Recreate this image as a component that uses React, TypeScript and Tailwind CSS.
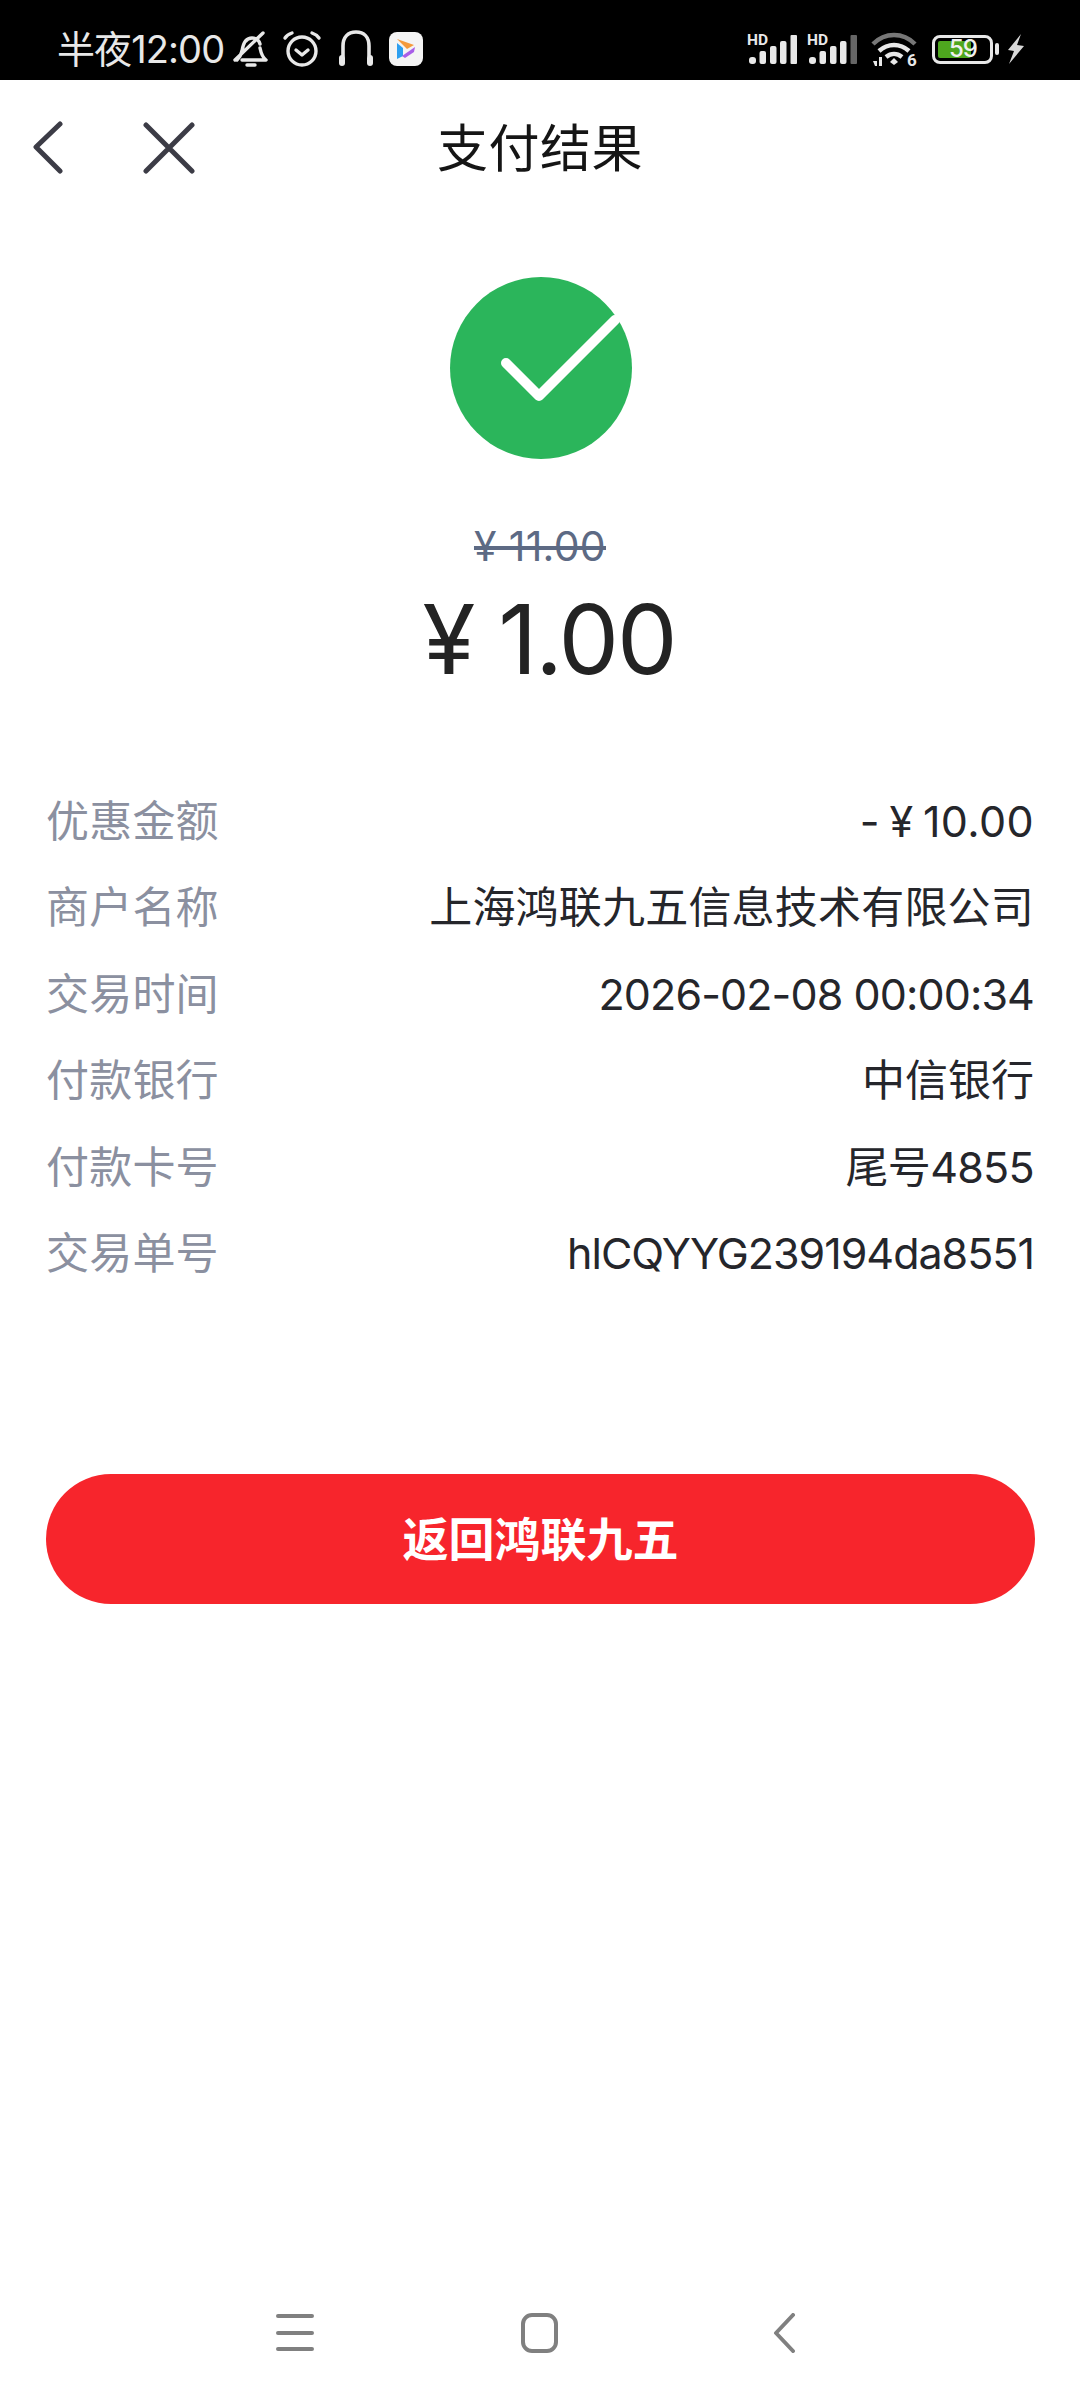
const SANS = "font-['Inter','Noto_Sans_CJK_SC',sans-serif]";

function Signal({ lastBar }: { lastBar: string }) {
  return (
    <svg width="50" height="32" viewBox="0 0 50 32" fill="#e8e8e8" className="overflow-visible">
      <text x="0" y="12" fontSize="15.5" fontWeight="700" fontFamily="Roboto, sans-serif">HD</text>
      <rect x="2" y="24" width="7" height="7" rx="3" />
      <rect x="12.5" y="18" width="6.5" height="13" rx="2" />
      <rect x="23" y="13" width="6.5" height="18" rx="2" />
      <rect x="33" y="8" width="6.5" height="23" rx="2" />
      <rect x="43.5" y="2" width="6.5" height="29" rx="1" fill={lastBar} />
    </svg>
  );
}

function StatusBar() {
  return (
    <div className="h-[80px] bg-black flex items-center justify-between pl-[57px] pr-[55px] pt-[26px] pb-[8px] text-[#e8e8e8]">
      <div className="flex items-center">
        <span className="text-[38px] leading-[48px] tracking-[-0.9px]">半夜12:00</span>
        <svg className="ml-[9px]" width="36" height="38" viewBox="0 0 36 38" fill="none" stroke="#e8e8e8" strokeWidth="3.4" strokeLinecap="round" strokeLinejoin="round">
          <path d="M4 30c3-3 4-5 5-9 1-7 3-13 10-13 4 0 7 2 8 6M27 18c1 5 2 9 6 12H9M2 30L30 3M14 35h8" />
        </svg>
        <svg className="ml-[13px]" width="40" height="38" viewBox="0 0 40 38" fill="none" stroke="#e8e8e8" strokeWidth="3.4" strokeLinecap="round" strokeLinejoin="round">
          <circle cx="20" cy="21" r="14" />
          <path d="M14 20l6 5 6-5M3 8c2-3 4-4 7-5M37 8c-2-3-4-4-7-5" />
        </svg>
        <svg className="ml-[15px]" width="38" height="38" viewBox="0 0 38 38" fill="none" stroke="#e8e8e8" strokeWidth="3.6" strokeLinecap="round">
          <path d="M6 26V16C6 7 11 2 19 2s13 5 13 14v10" />
          <rect x="2" y="25" width="6" height="11" rx="3" fill="#e8e8e8" strokeWidth="0" />
          <rect x="30" y="25" width="6" height="11" rx="3" fill="#e8e8e8" strokeWidth="0" />
        </svg>
        <svg className="ml-[14px]" width="34" height="34" viewBox="0 0 34 34">
          <rect width="34" height="34" rx="8" fill="#f4f4f4" />
          <path d="M8 7l17 6-7 4z" fill="#f59a3c" />
          <path d="M8 11l6 5v8l-6 3z" fill="#2c9ff0" />
          <path d="M13 24l13-9-1 5-9 6z" fill="#a85ee8" />
        </svg>
      </div>
      <div className="flex items-center">
        <Signal lastBar="#e8e8e8" />
        <div className="ml-[10px] flex">
          <Signal lastBar="#666666" />
        </div>
        <svg className="ml-[13px]" width="48" height="36" viewBox="0 0 48 36" fill="none" strokeLinecap="butt">
          <path d="M3 13C15 1 33 1 45 13" stroke="#777" strokeWidth="4.5" />
          <path d="M9 20c9-8 21-8 30 0" stroke="#e8e8e8" strokeWidth="4.5" />
          <path d="M16 26c5-4 11-4 16 0" stroke="#e8e8e8" strokeWidth="4.5" />
          <path d="M20 31l4-4 4 4-4 3z" fill="#e8e8e8" />
          <path d="M3 30h4v5H5zM9 26h3v9H9z" fill="#e8e8e8" />
          <text x="37" y="35" fontSize="17" fontWeight="700" fill="#e8e8e8" fontFamily="Roboto, sans-serif">6</text>
        </svg>
        <div className="ml-[14px] w-[61px] h-[29px] rounded-[8px] border-[3px] border-[#e8e8e8] p-[3px] relative flex">
          <div className="w-[33px] bg-[#4ea61e] rounded-[2px]"></div>
          <span className="absolute left-[14px] top-[-6px] text-[24px] leading-[34px] font-medium tracking-[-1px] text-[#f0f0f0]">59</span>
        </div>
        <div className="ml-[2px] w-[4px] h-[12px] rounded-[2px] bg-[#e8e8e8]"></div>
        <svg className="ml-[8px]" width="18" height="30" viewBox="0 0 18 30" fill="#d8d8d8">
          <path d="M14 0L1 16l6 1-5 13 15-18-7-1 4-11z" />
        </svg>
      </div>
    </div>
  );
}

function Row({ label, value, cls }: { label: string; value: string; cls: string }) {
  return (
    <div className="h-[86.4px] flex items-center justify-between">
      <span className="text-[#8b90a0] text-[43px] tracking-[0.2px]">{label}</span>
      <span className={`text-[#25262b] text-[43px] ${cls}`}>{value}</span>
    </div>
  );
}

export default function App() {
  return (
    <div className={`w-[1080px] h-[2400px] bg-white flex flex-col ${SANS}`}>
      <StatusBar />
      <div className="h-[136px] flex items-center relative pl-[32px]">
        <svg width="36" height="54" viewBox="0 0 36 54" fill="none" stroke="#3c3c46" strokeWidth="5" strokeLinecap="round" strokeLinejoin="round">
          <path d="M28 3L4 26l24 24" />
        </svg>
        <svg className="ml-[75px]" width="52" height="52" viewBox="0 0 52 52" fill="none" stroke="#3c3c46" strokeWidth="5" strokeLinecap="round">
          <path d="M3 3l46 46M49 3L3 49" />
        </svg>
        <div className="absolute inset-0 pt-[3px] flex items-center justify-center text-[51px] tracking-[0.5px] text-[#151515]">支付结果</div>
      </div>
      <div className="mt-[60px] pl-[1px] flex justify-center">
        <svg width="184" height="184" viewBox="0 0 184 184">
          <circle cx="92" cy="92" r="91" fill="#2bb55b" />
          <path d="M57 87l33 33 76-76" fill="none" stroke="#fff" strokeWidth="10" strokeLinecap="round" strokeLinejoin="round" />
        </svg>
      </div>
      <div className="mt-[60px] text-center text-[41px] leading-[52px] text-[#5d6a84] line-through tracking-[0.3px]">¥ 11.00</div>
      <div className="mt-[11px] pl-[18px] text-center text-[96px] leading-[112px] text-[#232323] tracking-[-2px]">¥ 1.00</div>
      <div className="mt-[83px] px-[46px] flex flex-col">
        <Row label="优惠金额" value="- ¥ 10.00" cls="tracking-[0.4px] [word-spacing:-3px]" />
        <Row label="商户名称" value="上海鸿联九五信息技术有限公司" cls="tracking-[0.2px]" />
        <Row label="交易时间" value="2026-02-08 00:00:34" cls="tracking-[-0.9px]" />
        <Row label="付款银行" value="中信银行" cls="tracking-[0px]" />
        <Row label="付款卡号" value="尾号4855" cls="tracking-[-0.7px]" />
        <Row label="交易单号" value="hlCQYYG239194da8551" cls="tracking-[-1px]" />
      </div>
      <button className="mt-[178px] ml-[46px] mr-[45px] h-[130px] rounded-full bg-[#f7252c] text-white text-[46px] font-bold">返回鸿联九五</button>
      <div className="mt-auto mb-[37px] h-[60px] relative flex items-center">
        <svg className="ml-[276px]" width="40" height="40" viewBox="0 0 40 40" fill="none" stroke="#808080" strokeWidth="4" strokeLinecap="round">
          <path d="M2 3h34M2 20h34M2 36h34" />
        </svg>
        <svg className="ml-[204px]" width="40" height="40" viewBox="0 0 40 40" fill="none" stroke="#808080" strokeWidth="4">
          <rect x="3" y="2" width="33" height="36" rx="9" />
        </svg>
        <svg className="ml-[213px]" width="24" height="40" viewBox="0 0 24 40" fill="none" stroke="#808080" strokeWidth="4" strokeLinecap="round" strokeLinejoin="round">
          <path d="M20 2L3 20l17 18" />
        </svg>
      </div>
    </div>
  );
}
